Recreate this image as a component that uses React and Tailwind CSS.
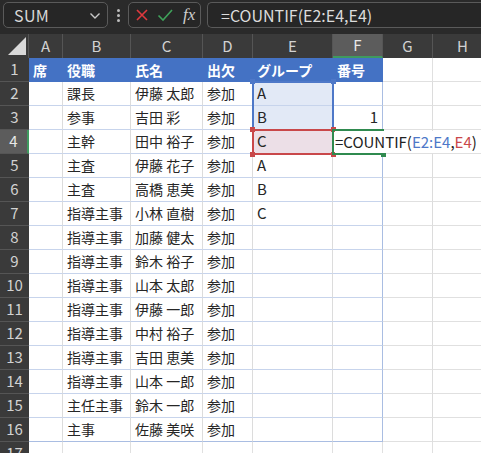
import React from 'react';

const cols = [
  { key: 'A', w: 34 },
  { key: 'B', w: 68 },
  { key: 'C', w: 72 },
  { key: 'D', w: 50 },
  { key: 'E', w: 80 },
  { key: 'F', w: 50 },
  { key: 'G', w: 50 },
  { key: 'H', w: 60 },
];

const rows = [
  ['', '課長', '伊藤 太郎', '参加', 'A', ''],
  ['', '参事', '吉田 彩', '参加', 'B', '1'],
  ['', '主幹', '田中 裕子', '参加', 'C', ''],
  ['', '主査', '伊藤 花子', '参加', 'A', ''],
  ['', '主査', '高橋 恵美', '参加', 'B', ''],
  ['', '指導主事', '小林 直樹', '参加', 'C', ''],
  ['', '指導主事', '加藤 健太', '参加', '', ''],
  ['', '指導主事', '鈴木 裕子', '参加', '', ''],
  ['', '指導主事', '山本 太郎', '参加', '', ''],
  ['', '指導主事', '伊藤 一郎', '参加', '', ''],
  ['', '指導主事', '中村 裕子', '参加', '', ''],
  ['', '指導主事', '吉田 恵美', '参加', '', ''],
  ['', '指導主事', '山本 一郎', '参加', '', ''],
  ['', '主任主事', '鈴木 一郎', '参加', '', ''],
  ['', '主事', '佐藤 美咲', '参加', '', ''],
];

const header = ['席', '役職', '氏名', '出欠', 'グループ', '番号'];

const font = { fontFamily: '"Noto Sans CJK JP", "Noto Sans", sans-serif' };

function RowHeader({ n, active }) {
  return (
    <div
      className={`w-[29px] h-[24px] shrink-0 flex items-center justify-center text-[15px] border-b border-[#555] ${
        active ? 'bg-[#5c5c5c] text-[#e8e8e8] border-r-2 border-r-[#3f9a5f]' : 'bg-[#3a3a3a] text-[#d2d2d2]'
      }`}
    >
      {n}
    </div>
  );
}

function cellBg(r, c) {
  if (c === 4 && (r === 1 || r === 2)) return 'bg-[#e2e9f6]';
  if (c === 4 && r === 3) return 'bg-[#ecdfe7]';
  return 'bg-white';
}

export default function App() {
  return (
    <div className="w-[481px] h-[453px] overflow-hidden bg-white" style={font}>
      {/* formula bar */}
      <div className="h-[34px] bg-[#2a2a2a] flex items-center">
        <div className="ml-[3px] w-[105px] h-[26px] mt-[-4px] rounded-[5px] border border-[#5a5a5a] bg-[#262626] flex items-center justify-between pl-[10px] pr-[6px]">
          <span className="text-[16px] text-[#d8d8d8] tracking-wide">SUM</span>
          <svg width="12" height="8" viewBox="0 0 12 8" className="mt-[1px]">
            <path d="M1.5 1.5 L6 6 L10.5 1.5" fill="none" stroke="#c8c8c8" strokeWidth="1.4" />
          </svg>
        </div>
        <div className="w-[20px] flex flex-col items-center gap-[2px] mt-[-4px]">
          <span className="w-[3px] h-[3px] rounded-full bg-[#bdbdbd]" />
          <span className="w-[3px] h-[3px] rounded-full bg-[#bdbdbd]" />
          <span className="w-[3px] h-[3px] rounded-full bg-[#bdbdbd]" />
        </div>
        <div className="w-[73px] h-[26px] mt-[-4px] rounded-[5px] border border-[#5a5a5a] bg-[#262626] flex items-center pl-[6px] gap-[8px]">
          <svg width="14" height="14" viewBox="0 0 14 14">
            <path d="M2 2 L12 12 M12 2 L2 12" stroke="#e0393e" strokeWidth="1.6" fill="none" />
          </svg>
          <svg width="16" height="14" viewBox="0 0 16 14">
            <path d="M1.5 7.5 L6 12 L15 2" stroke="#3fa15a" strokeWidth="1.6" fill="none" />
          </svg>
          <span className="ml-[2px] text-[17px] italic text-[#cfcfcf]" style={{ fontFamily: '"Liberation Serif", serif' }}>
            fx
          </span>
        </div>
        <div className="ml-[6px] flex-1 h-[26px] mt-[-4px] rounded-l-[5px] border border-r-0 border-[#5a5a5a] bg-[#262626] flex items-center pl-[13px]">
          <span className="text-[16px] text-[#dcdcdc]">=COUNTIF(E2:E4,E4)</span>
        </div>
      </div>

      {/* column headers */}
      <div className="flex h-[24px] bg-[#3a3a3a]">
        <div className="w-[29px] shrink-0 relative border-r border-[#555]">
          <svg width="20" height="20" viewBox="0 0 20 20" className="absolute left-[7px] top-[2px]">
            <path d="M19 1 L19 19 L1 19 Z" fill="#d9d9d9" />
          </svg>
        </div>
        {cols.map((c) => (
          <div
            key={c.key}
            style={{ width: c.w }}
            className={`shrink-0 flex items-center justify-center text-[15px] border-r border-[#555] ${
              c.key === 'F' ? 'bg-[#5c5c5c] text-[#e8e8e8] border-b-2 border-b-[#3f9a5f]' : 'text-[#d2d2d2]'
            }`}
          >
            {c.key}
          </div>
        ))}
      </div>

      {/* body */}
      <div className="relative">
        {/* row 1 header */}
        <div className="flex">
          <RowHeader n={1} />
          {cols.map((c, ci) => (
            <div
              key={c.key}
              style={{ width: c.w }}
              className={`shrink-0 h-[24px] flex items-center px-[4px] whitespace-nowrap overflow-hidden ${
                ci < 6
                  ? 'bg-[#4472c4] text-white font-bold text-[14px]'
                  : 'bg-white border-r border-b border-[#e0e0e0]'
              }`}
            >
              {ci < 6 ? header[ci] : ''}
            </div>
          ))}
        </div>

        {rows.map((r, ri) => (
          <div className="flex" key={ri}>
            <RowHeader n={ri + 2} active={ri === 2} />
            {cols.map((c, ci) => {
              const inTable = ci < 6;
              const val = inTable ? r[ci] : '';
              const lastRow = ri === rows.length - 1;
              return (
                <div
                  key={c.key}
                  style={{ width: c.w }}
                  className={`shrink-0 h-[24px] flex items-center px-[4px] text-[14px] text-[#262626] whitespace-nowrap overflow-hidden border-b ${
                    inTable ? (lastRow ? 'border-b-[#a9bde2]' : 'border-b-[#c7d4ec]') : 'border-b-[#e0e0e0]'
                  } border-r ${ci === 5 ? 'border-r-[#a9bde2]' : 'border-r-[#dcdcdc]'} ${
                    ci === 5 ? 'justify-end text-[15px]' : ''
                  } ${ci === 4 ? 'text-[15px]' : ''} ${inTable ? cellBg(ri + 1, ci) : 'bg-white'}`}
                >
                  {val}
                </div>
              );
            })}
          </div>
        ))}

        {/* row 17 */}
        <div className="flex">
          <RowHeader n={17} />
          {cols.map((c) => (
            <div key={c.key} style={{ width: c.w }} className="shrink-0 h-[24px] bg-white border-r border-b border-[#e0e0e0]" />
          ))}
        </div>

        {/* E2:E3 reference (blue) */}
        <div className="absolute left-[252px] top-[23px] w-[82px] h-[50px] border-2 border-[#4e78c8] pointer-events-none" />
        <div className="absolute left-[250px] top-[21px] w-[5px] h-[5px] bg-[#4e78c8]" />
        <div className="absolute left-[331px] top-[21px] w-[5px] h-[5px] bg-[#4e78c8]" />

        {/* E4 reference (red) */}
        <div className="absolute left-[252px] top-[71px] w-[82px] h-[26px] border-2 border-[#c9484a] pointer-events-none" />
        <div className="absolute left-[250px] top-[69px] w-[5px] h-[5px] bg-[#c9484a]" />
        <div className="absolute left-[331px] top-[69px] w-[5px] h-[5px] bg-[#c9484a]" />
        <div className="absolute left-[250px] top-[94px] w-[5px] h-[5px] bg-[#c9484a]" />
        <div className="absolute left-[331px] top-[94px] w-[5px] h-[5px] bg-[#c9484a]" />

        {/* active cell F4 */}
        <div className="absolute left-[332px] top-[71px] w-[52px] h-[26px] border-2 border-[#2f8a4f] pointer-events-none" />
        <div className="absolute left-[381px] top-[94px] w-[5px] h-[5px] bg-[#2f8a4f]" />
        <div className="absolute left-[335px] top-[73px] right-0 h-[22px] bg-white flex items-center whitespace-nowrap text-[15px] text-[#222]">
          =COUNTIF(<span className="text-[#4e78c8]">E2:E4</span>,<span className="text-[#c9484a]">E4</span>)
        </div>
      </div>
    </div>
  );
}
